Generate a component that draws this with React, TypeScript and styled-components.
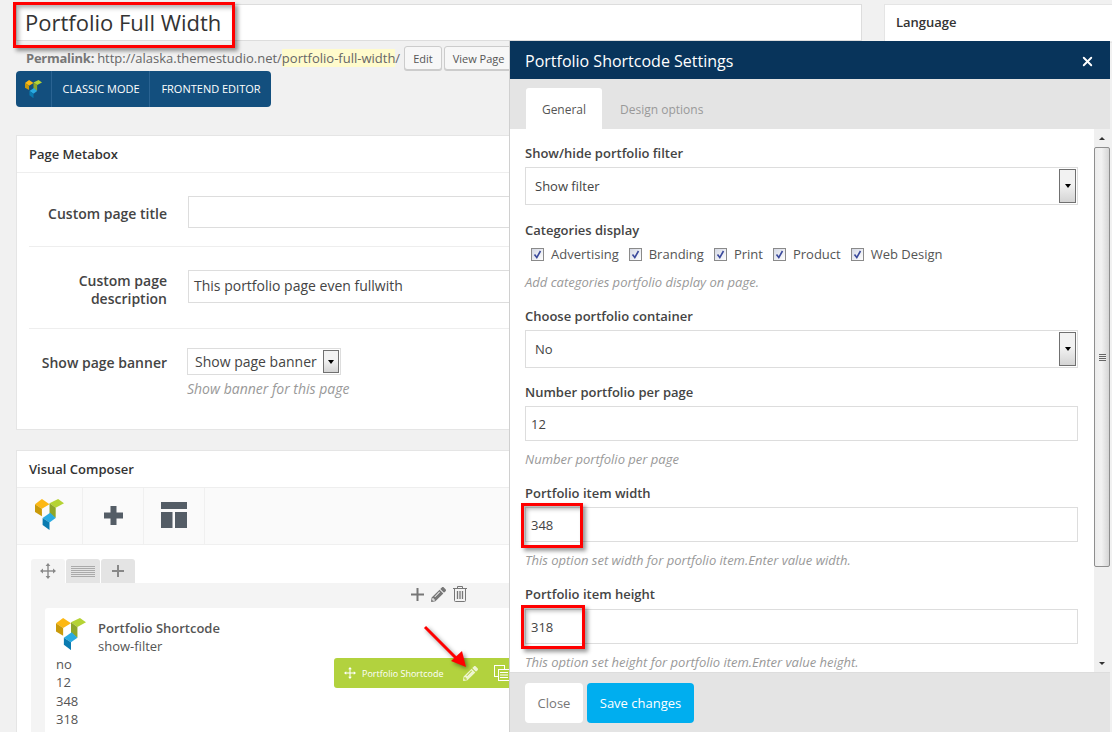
import React from "react";
import styled, { createGlobalStyle } from "styled-components";
import { X } from "lucide-react";
import { FaPencilAlt } from "react-icons/fa";

const GlobalStyle = createGlobalStyle`
  html, body {
    margin: 0;
    padding: 0;
    height: 732px;
    overflow: hidden;
    background: #f1f1f1;
    font-family: "Open Sans", "Liberation Sans", sans-serif;
    font-size: 13px;
    color: #444;
  }
  * { box-sizing: border-box; }
`;

const Page = styled.div`
  position: relative;
  width: 1112px;
  height: 732px;
  overflow: hidden;
  display: grid;
  grid-template-columns: 846px 300px;
  column-gap: 22px;
  padding: 4px 0 0 16px;
`;

const Main = styled.div`
  display: flex;
  flex-direction: column;
  min-width: 0;
`;

const Side = styled.div`
  display: flex;
  flex-direction: column;
`;

const TitleBox = styled.div`
  position: relative;
  height: 37px;
  background: #fff;
  border: 1px solid #ddd;
  padding-left: 8px;
  font-size: 22px;
  line-height: 35px;
  color: #333;
`;

const Marker = styled.div<{ $left: number; $top: number; $w: number; $h: number }>`
  position: absolute;
  left: ${(p) => p.$left}px;
  top: ${(p) => p.$top}px;
  width: ${(p) => p.$w}px;
  height: ${(p) => p.$h}px;
  border: 3px solid #f00;
  box-shadow: 3px 3px 4px rgba(0, 0, 0, 0.4), inset 3px 3px 4px rgba(0, 0, 0, 0.3);
  pointer-events: none;
`;

const PermalinkRow = styled.div`
  display: flex;
  align-items: center;
  height: 24px;
  margin-top: 5px;
  padding-left: 10px;
  font-size: 13px;
  color: #666;
  white-space: nowrap;
`;

const PermalinkLabel = styled.b`
  font-weight: 700;
  color: #777;
  margin-right: 3px;
  letter-spacing: -0.25px;
`;

const Slug = styled.span`
  background: #fffbcc;
`;

const SmallButton = styled.span`
  display: inline-flex;
  align-items: center;
  height: 24px;
  padding: 0 8px;
  margin-left: 4px;
  font-size: 11px;
  color: #555;
  background: #f7f7f7;
  border: 1px solid #ccc;
  border-radius: 3px;
  box-shadow: 0 1px 0 #ccc;
  & + & {
    margin-left: 2px;
  }
`;

const ModeBar = styled.div`
  display: flex;
  align-items: stretch;
  width: 255px;
  height: 36px;
  margin-top: 1px;
  background: #134f7e;
  border-radius: 4px;
  overflow: hidden;
`;

const ModeLogo = styled.div`
  width: 36px;
  display: flex;
  align-items: flex-start;
  padding: 9px 0 0 9px;
  border-right: 1px solid #2a6392;
`;

const ModeItem = styled.div<{ $w: number }>`
  width: ${(p) => p.$w}px;
  display: flex;
  align-items: center;
  justify-content: center;
  padding: 0 0 2px 1px;
  font-size: 11px;
  color: #fff;
  border-right: 1px solid #2a6392;
  &:last-child {
    border-right: 0;
  }
`;

const Box = styled.section<{ $top: number }>`
  margin-top: ${(p) => p.$top}px;
  background: #fff;
  border: 1px solid #e5e5e5;
`;

const BoxTitle = styled.h2`
  margin: 0;
  height: 37px;
  padding-left: 12px;
  font-size: 13px;
  line-height: 36px;
  font-weight: 600;
  color: #333;
  border-bottom: 1px solid #eee;
`;

const SideTitle = styled(BoxTitle)`
  padding-left: 11px;
  line-height: 34px;
`;

const MetaRows = styled.div`
  padding: 0 12px;
  height: 256px;
`;

const MetaRow = styled.div<{ $h: number; $last?: boolean; $pad?: string }>`
  display: grid;
  grid-template-columns: 138px 1fr;
  column-gap: 21px;
  align-items: ${(p) => (p.$last ? "start" : "center")};
  height: ${(p) => p.$h}px;
  padding: ${(p) => p.$pad ?? "0"};
  border-bottom: ${(p) => (p.$last ? "0" : "1px solid #eee")};
`;

const MetaLabel = styled.label<{ $nudge?: number }>`
  margin-top: ${(p) => p.$nudge ?? 0}px;
  font-size: 14px;
  line-height: 18px;
  font-weight: 600;
  text-align: right;
  color: #444;
`;

const MetaInput = styled.div<{ $h: number }>`
  height: ${(p) => p.$h}px;
  padding-left: 5px;
  font-size: 14px;
  line-height: ${(p) => p.$h - 4}px;
  background: #fff;
  border: 1px solid #ddd;
  color: #444;
`;

const BannerCell = styled.div`
  display: flex;
  flex-direction: column;
  align-items: flex-start;
  margin: 19px 0 0 -1px;
`;

const NativeSelect = styled.div`
  display: flex;
  align-items: center;
  justify-content: space-between;
  width: 154px;
  height: 27px;
  padding: 1px 1px 1px 7px;
  font-size: 14px;
  background: #fff;
  border: 1px solid #ddd;
  color: #444;
`;

const SelectArrow = styled.span<{ $w: number }>`
  flex: none;
  display: flex;
  align-items: center;
  justify-content: center;
  width: ${(p) => p.$w}px;
  height: 100%;
  border: 1px solid #707070;
  background: linear-gradient(#f2f2f2, #f2f2f2 45%, #d4d4d4);
  &::after {
    content: "";
    border-left: 3.5px solid transparent;
    border-right: 3.5px solid transparent;
    border-top: 4px solid #000;
  }
`;

const MetaHelp = styled.div`
  margin-top: 5px;
  font-size: 14px;
  line-height: 18px;
  font-style: italic;
  color: #999;
`;

const ToolStrip = styled.div`
  display: flex;
  height: 57px;
  background: #fafafa;
  border-bottom: 1px solid #f0f0f0;
`;

const ToolCell = styled.div<{ $w: number }>`
  width: ${(p) => p.$w}px;
  display: flex;
  align-items: center;
  justify-content: center;
  padding-bottom: 2px;
  border-right: 1px solid #f0f0f0;
  color: #545d66;
`;

const Canvas = styled.div`
  padding: 14px 0 0 14px;
`;

const RowTabs = styled.div`
  display: flex;
  gap: 1px;
  height: 24px;
`;

const RowTab = styled.div<{ $active?: boolean }>`
  width: 34px;
  display: flex;
  align-items: center;
  justify-content: center;
  border-radius: 3px 3px 0 0;
  background: ${(p) => (p.$active ? "#f4f4f4" : "#e4e4e4")};
  color: #888;
`;

const Lines = styled.span`
  width: 24px;
  height: 11px;
  background: repeating-linear-gradient(#aaa, #aaa 1px, transparent 1px, transparent 2px);
`;

const RowBody = styled.div`
  background: #f4f4f4;
  padding: 0 0 0 14px;
  height: 160px;
`;

const RowActions = styled.div`
  display: flex;
  align-items: center;
  gap: 7px;
  height: 25px;
  padding: 0 0 3px 366px;
  color: #777;
`;

const ElementCard = styled.div`
  position: relative;
  background: #fff;
  border-radius: 3px 3px 0 0;
  padding: 10px 0 0 11px;
  height: 135px;
`;

const CardHead = styled.div`
  display: flex;
  gap: 12px;
  margin-bottom: -1px;
`;

const CardHeadText = styled.div`
  padding-top: 1px;
`;

const CardTitle = styled.div`
  font-size: 13px;
  line-height: 18px;
  font-weight: 600;
  color: #555;
`;

const CardLine = styled.div`
  font-size: 13px;
  line-height: 18.5px;
  color: #555;
`;

const HoverBar = styled.div`
  position: absolute;
  left: 289px;
  top: 50px;
  display: flex;
  align-items: center;
  width: 300px;
  height: 30px;
  padding-left: 10px;
  background: #b2d23e;
  border-radius: 3px;
  color: #fff;
`;

const HoverLabel = styled.span`
  margin: 0 19px 0 6px;
  font-size: 9px;
`;

const HoverPencil = styled.span`
  display: flex;
  margin-right: 16px;
  color: #eef5d0;
`;

const Arrow = styled.svg`
  position: absolute;
  left: 379px;
  top: 18px;
  overflow: visible;
  filter: drop-shadow(2px 2px 2px rgba(0, 0, 0, 0.45));
`;

const LogoSvg = styled.svg`
  flex: none;
`;

const Modal = styled.div`
  position: absolute;
  left: 509px;
  top: 41px;
  width: 601px;
  height: 691px;
  display: flex;
  flex-direction: column;
  background: #e4e4e4;
  border-left: 1px solid #d0d0d0;
`;

const ModalHeader = styled.header`
  flex: none;
  display: flex;
  align-items: center;
  justify-content: space-between;
  height: 38px;
  padding: 2px 15px 0 15px;
  background: #08345b;
  color: #fff;
  font-size: 16px;
`;

const CloseGlyph = styled.span`
  display: flex;
`;

const TabBar = styled.nav`
  flex: none;
  display: flex;
  height: 50px;
  padding: 9px 0 0 16px;
`;

const Tab = styled.div<{ $active?: boolean }>`
  display: flex;
  align-items: center;
  justify-content: center;
  width: ${(p) => (p.$active ? "76px" : "auto")};
  font-size: 12px;
  margin-right: ${(p) => (p.$active ? "18px" : "0")};
  padding-top: 2px;
  border-radius: 3px 3px 0 0;
  background: ${(p) => (p.$active ? "#fff" : "transparent")};
  color: ${(p) => (p.$active ? "#555" : "#999")};
  white-space: nowrap;
`;

const ModalBody = styled.div`
  flex: none;
  display: flex;
  height: 543px;
  background: #fff;
  overflow: hidden;
`;

const Form = styled.div`
  flex: 1;
  padding: 15px 16px 0 15px;
  min-width: 0;
`;

const Field = styled.div<{ $bottom?: number }>`
  margin-bottom: ${(p) => p.$bottom ?? 16}px;
`;

const FieldLabel = styled.label<{ $gap?: number }>`
  display: block;
  height: 18px;
  margin-bottom: ${(p) => p.$gap ?? 5}px;
  font-size: 13px;
  line-height: 18px;
  font-weight: 600;
  color: #444;
`;

const ValueBox = styled.div<{ $h: number }>`
  position: relative;
  display: flex;
  align-items: center;
  justify-content: space-between;
  height: ${(p) => p.$h}px;
  padding: 1px 1px 1px 9px;
  font-size: 13px;
  background: #fff;
  border: 1px solid #ddd;
  color: #444;
`;

const NumberBox = styled(ValueBox)`
  padding-left: 5px;
`;

const ChecksRow = styled.div`
  display: flex;
  align-items: center;
  height: 18px;
  margin-top: 6px;
  padding-left: 6px;
`;

const CheckItem = styled.label`
  display: flex;
  align-items: center;
  gap: 7px;
  margin-right: 10px;
  font-size: 13px;
  color: #555;
`;

const CheckBox = styled.span`
  width: 13px;
  height: 13px;
  display: flex;
  align-items: center;
  justify-content: center;
  border: 1px solid #8a8a8a;
  background: linear-gradient(135deg, #d4d8e4, #fff);
`;

const Help = styled.div<{ $top?: number }>`
  height: 18px;
  margin-top: ${(p) => p.$top ?? 9}px;
  font-size: 13px;
  line-height: 18px;
  font-style: italic;
  color: #999;
  white-space: nowrap;
`;

const ScrollTrack = styled.div`
  flex: none;
  width: 16px;
  display: flex;
  flex-direction: column;
  background: #f0f0f0;
`;

const ScrollButton = styled.div<{ $dir: "up" | "down" }>`
  flex: none;
  height: 18px;
  display: flex;
  align-items: center;
  justify-content: center;
  &::after {
    content: "";
    border-left: 3px solid transparent;
    border-right: 3px solid transparent;
    border-top: ${(p) => (p.$dir === "down" ? "3px solid #333" : "0")};
    border-bottom: ${(p) => (p.$dir === "up" ? "3px solid #333" : "0")};
  }
`;

const ScrollThumb = styled.div`
  flex: none;
  height: 420px;
  display: flex;
  align-items: center;
  justify-content: center;
  border: 1px solid #8e8e8e;
  border-radius: 2px;
  background: linear-gradient(90deg, #ececec, #f2f2f2 45%, #d5d5d5);
`;

const Grip = styled.span`
  width: 7px;
  height: 7px;
  background: repeating-linear-gradient(#666, #666 1px, #eee 1px, #eee 2px);
`;

const ScrollRest = styled.div`
  flex: 1;
`;

const ModalFooter = styled.footer`
  flex: none;
  display: flex;
  gap: 4px;
  height: 60px;
  padding: 10px 0 0 15px;
  border-top: 1px solid #ddd;
`;

const FootButton = styled.button<{ $primary?: boolean }>`
  height: 40px;
  padding: 0;
  width: ${(p) => (p.$primary ? "107px" : "58px")};
  font-family: inherit;
  font-size: 13px;
  border: 0;
  border-radius: 4px;
  background: ${(p) => (p.$primary ? "#00aeef" : "#fff")};
  color: ${(p) => (p.$primary ? "#fff" : "#777")};
`;

const VcLogo = ({ size }: { size: number }) => (
  <LogoSvg width={size} height={(size * 90) / 84} viewBox="0 0 84 90">
    <polygon points="0,15 20,0 42,15 20,28" fill="#fdb813" />
    <polygon points="0,15 20,28 20,50 0,38" fill="#c99a0a" />
    <polygon points="42,12 67,0 84,12 60,25" fill="#b5d334" />
    <polygon points="42,12 60,25 60,55 42,42" fill="#8ea62a" />
    <polygon points="22,55 44,40 60,55 42,68" fill="#29abe2" />
    <polygon points="22,55 42,68 42,90 22,75" fill="#0a7bb0" />
  </LogoSvg>
);

const SquarePlus = ({ size, bar }: { size: number; bar: number }) => {
  const start = (size - bar) / 2;
  return (
    <svg width={size} height={size} viewBox={`0 0 ${size} ${size}`} fill="currentColor">
      <rect x={start} y="0" width={bar} height={size} />
      <rect x="0" y={start} width={size} height={bar} />
    </svg>
  );
};

const MoveMark = ({ size }: { size: number }) => (
  <svg width={size} height={size} viewBox="0 0 16 16" fill="currentColor">
    <rect x="7.3" y="2" width="1.4" height="12" />
    <rect x="2" y="7.3" width="12" height="1.4" />
    <polygon points="8,0 10.4,3 5.6,3" />
    <polygon points="8,16 10.4,13 5.6,13" />
    <polygon points="0,8 3,5.6 3,10.4" />
    <polygon points="16,8 13,5.6 13,10.4" />
  </svg>
);

const TrashMark = () => (
  <svg width="14" height="16" viewBox="0 0 14 16" fill="none" stroke="currentColor" strokeWidth="1">
    <path d="M0 2.5h14M4.5 2.5V.5h5v2" />
    <path d="M1.5 2.5v12a1 1 0 0 0 1 1h9a1 1 0 0 0 1-1v-12" />
    <path d="M4.5 5v8M7 5v8M9.5 5v8" strokeWidth="1.3" />
  </svg>
);

const TemplatesIcon = () => (
  <svg width="26" height="26" viewBox="0 0 26 26" fill="#545d66">
    <rect x="0" y="0" width="26" height="7" />
    <rect x="0" y="10" width="11.5" height="16" />
    <rect x="14" y="10" width="12" height="16" />
  </svg>
);

const CloneIcon = () => (
  <svg width="16" height="16" viewBox="0 0 16 16" fill="none" stroke="#fff" strokeWidth="1">
    <rect x="0.5" y="0.5" width="10" height="11" />
    <rect x="4.5" y="4.5" width="11" height="11" fill="#b2d23e" />
    <path d="M6 7.5h8M6 10h8M6 12.5h8" />
  </svg>
);

const Tick = () => (
  <svg width="9" height="9" viewBox="0 0 9 9" fill="none" stroke="#3b4a9c" strokeWidth="1.6">
    <path d="M1.5 4.5 3.8 7.5 7.5 1" />
  </svg>
);

const categories = ["Advertising", "Branding", "Print", "Product", "Web Design"];

export default function App() {
  return (
    <Page>
      <GlobalStyle />
      <Main>
        <TitleBox>
          Portfolio Full Width
          <Marker $left={-4} $top={-3} $w={222} $h={46} />
        </TitleBox>
        <PermalinkRow>
          <PermalinkLabel>Permalink:</PermalinkLabel>
          http://alaska.themestudio.net/<Slug>portfolio-full-width</Slug>/
          <SmallButton>Edit</SmallButton>
          <SmallButton>View Page</SmallButton>
        </PermalinkRow>
        <ModeBar>
          <ModeLogo>
            <VcLogo size={17} />
          </ModeLogo>
          <ModeItem $w={98}>CLASSIC MODE</ModeItem>
          <ModeItem $w={121}>FRONTEND EDITOR</ModeItem>
        </ModeBar>

        <Box $top={28}>
          <BoxTitle>Page Metabox</BoxTitle>
          <MetaRows>
            <MetaRow $h={74} $pad="5px 0 0">
              <MetaLabel $nudge={4}>Custom page title</MetaLabel>
              <MetaInput $h={32} />
            </MetaRow>
            <MetaRow $h={82} $pad="0 0 3px">
              <MetaLabel $nudge={7}>
                Custom page
                <br />
                description
              </MetaLabel>
              <MetaInput $h={33}>This portfolio page even fullwith</MetaInput>
            </MetaRow>
            <MetaRow $h={88} $last>
              <MetaLabel $nudge={25}>Show page banner</MetaLabel>
              <BannerCell>
                <NativeSelect>
                  Show page banner
                  <SelectArrow $w={16} />
                </NativeSelect>
                <MetaHelp>Show banner for this page</MetaHelp>
              </BannerCell>
            </MetaRow>
          </MetaRows>
        </Box>

        <Box $top={20}>
          <BoxTitle>Visual Composer</BoxTitle>
          <ToolStrip>
            <ToolCell $w={66}>
              <VcLogo size={29} />
            </ToolCell>
            <ToolCell $w={61}>
              <SquarePlus size={19} bar={6} />
            </ToolCell>
            <ToolCell $w={61}>
              <TemplatesIcon />
            </ToolCell>
          </ToolStrip>
          <Canvas>
            <RowTabs>
              <RowTab $active>
                <MoveMark size={16} />
              </RowTab>
              <RowTab>
                <Lines />
              </RowTab>
              <RowTab>
                <SquarePlus size={12} bar={2} />
              </RowTab>
            </RowTabs>
            <RowBody>
              <RowActions>
                <SquarePlus size={13} bar={2} />
                <FaPencilAlt size={15} />
                <TrashMark />
              </RowActions>
              <ElementCard>
                <CardHead>
                  <VcLogo size={30} />
                  <CardHeadText>
                    <CardTitle>Portfolio Shortcode</CardTitle>
                    <CardLine>show-filter</CardLine>
                  </CardHeadText>
                </CardHead>
                <CardLine>no</CardLine>
                <CardLine>12</CardLine>
                <CardLine>348</CardLine>
                <CardLine>318</CardLine>
                <HoverBar>
                  <MoveMark size={12} />
                  <HoverLabel>Portfolio Shortcode</HoverLabel>
                  <HoverPencil>
                    <FaPencilAlt size={15} />
                  </HoverPencil>
                  <CloneIcon />
                </HoverBar>
                <Arrow width="44" height="42" viewBox="0 0 44 42">
                  <path d="M1 1 33 33" stroke="#f00" strokeWidth="3" fill="none" />
                  <polygon points="42,41 27,35 38,25" fill="#f00" />
                </Arrow>
              </ElementCard>
            </RowBody>
          </Canvas>
        </Box>
      </Main>

      <Side>
        <Box $top={0}>
          <SideTitle>Language</SideTitle>
        </Box>
      </Side>

      <Modal>
        <ModalHeader>
          Portfolio Shortcode Settings
          <CloseGlyph>
            <X size={15} strokeWidth={3} />
          </CloseGlyph>
        </ModalHeader>
        <TabBar>
          <Tab $active>General</Tab>
          <Tab>Design options</Tab>
        </TabBar>
        <ModalBody>
          <Form>
            <Field>
              <FieldLabel>Show/hide portfolio filter</FieldLabel>
              <ValueBox $h={38}>
                Show filter
                <SelectArrow $w={17} />
              </ValueBox>
            </Field>
            <Field>
              <FieldLabel>Categories display</FieldLabel>
              <ChecksRow>
                {categories.map((name) => (
                  <CheckItem key={name}>
                    <CheckBox>
                      <Tick />
                    </CheckBox>
                    {name}
                  </CheckItem>
                ))}
              </ChecksRow>
              <Help $top={10}>Add categories portfolio display on page.</Help>
            </Field>
            <Field $bottom={15}>
              <FieldLabel>Choose portfolio container</FieldLabel>
              <ValueBox $h={38}>
                No
                <SelectArrow $w={17} />
              </ValueBox>
            </Field>
            <Field>
              <FieldLabel>Number portfolio per page</FieldLabel>
              <NumberBox $h={35}>12</NumberBox>
              <Help>Number portfolio per page</Help>
            </Field>
            <Field>
              <FieldLabel>Portfolio item width</FieldLabel>
              <NumberBox $h={35}>
                348
                <Marker $left={-5} $top={-5} $w={62} $h={45} />
              </NumberBox>
              <Help>This option set width for portfolio item.Enter value width.</Help>
            </Field>
            <Field>
              <FieldLabel $gap={6}>Portfolio item height</FieldLabel>
              <NumberBox $h={35}>
                318
                <Marker $left={-5} $top={-5} $w={64} $h={44} />
              </NumberBox>
              <Help>This option set height for portfolio item.Enter value height.</Help>
            </Field>
          </Form>
          <ScrollTrack>
            <ScrollButton $dir="up" />
            <ScrollThumb>
              <Grip />
            </ScrollThumb>
            <ScrollRest />
            <ScrollButton $dir="down" />
          </ScrollTrack>
        </ModalBody>
        <ModalFooter>
          <FootButton>Close</FootButton>
          <FootButton $primary>Save changes</FootButton>
        </ModalFooter>
      </Modal>
    </Page>
  );
}
